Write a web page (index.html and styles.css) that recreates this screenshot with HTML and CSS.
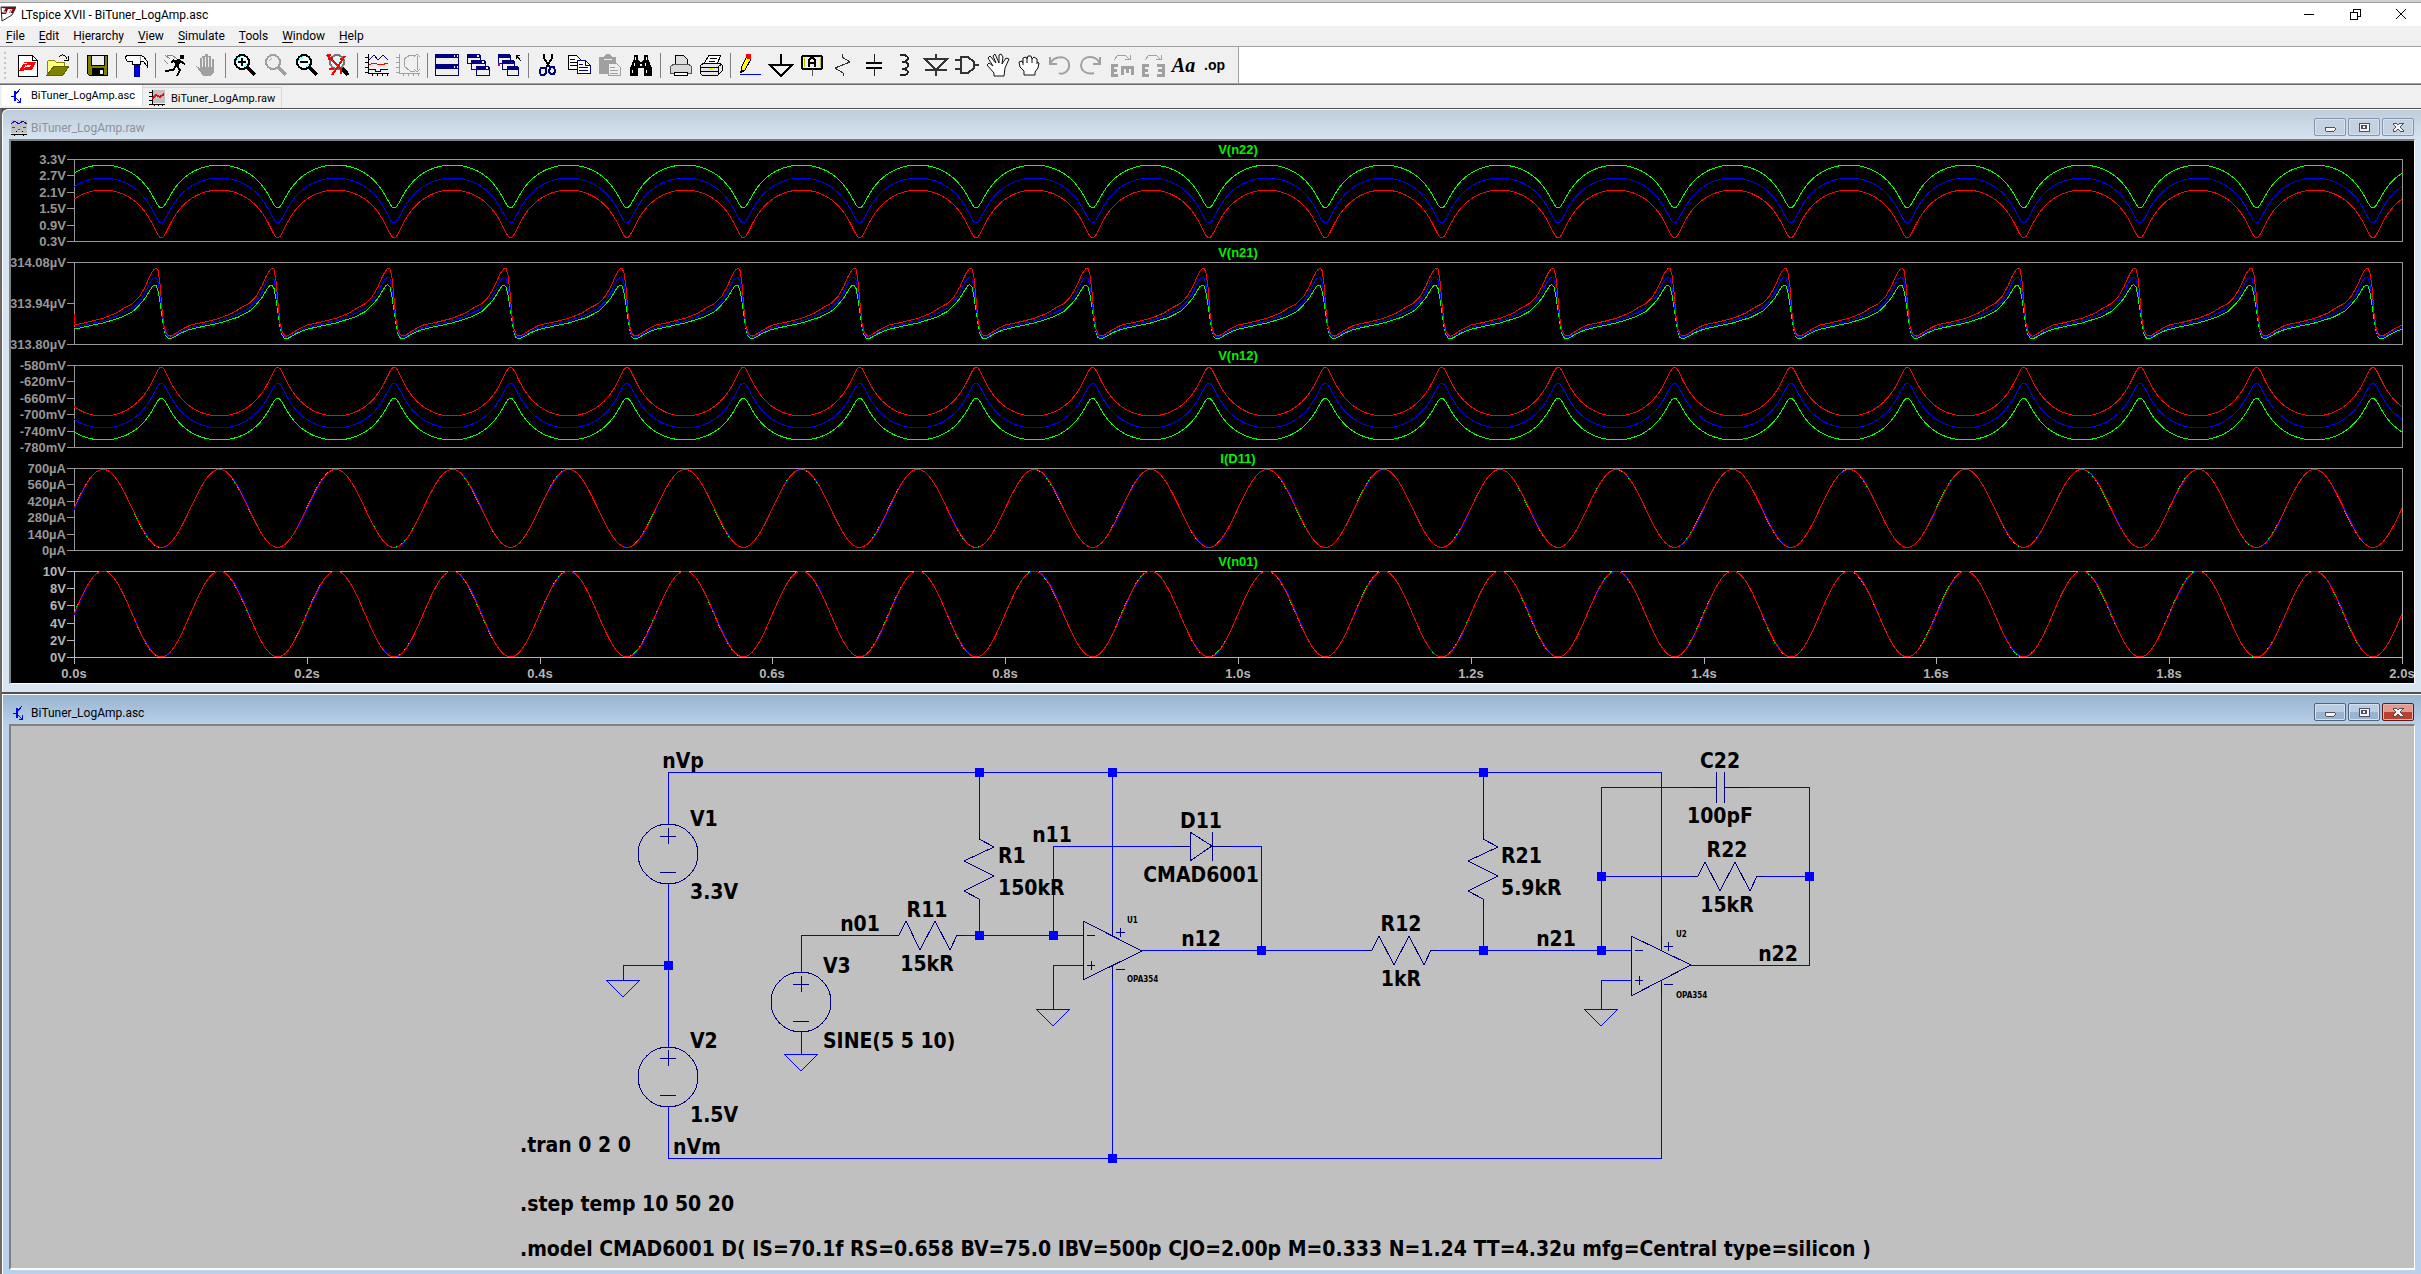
FILE: index.html
```html
<!DOCTYPE html>
<html lang="en">
<head>
<meta charset="utf-8">
<title>LTspice XVII - BiTuner_LogAmp.asc</title>
<link rel="stylesheet" href="styles.css">
</head>
<body>
<header class="titlebar">
  <svg class="app-icon" viewBox="0 0 16 16"><path d="M1 1H16L12 9L2 15Z" fill="#fff" stroke="#222"/><path d="M1 1H16L13 7H9L11 3H8L6 8H1L5 3Z" fill="#7a0a12"/><path d="M5 2L3 6H6M12 3L10 7" stroke="#fff" fill="none"/></svg>
  <h1>LTspice XVII - BiTuner_LogAmp.asc</h1>
  <div class="app-controls">
    <button aria-label="Minimize"><svg viewBox="0 0 12 12"><path d="M1 6H11" /></svg></button>
    <button aria-label="Restore"><svg viewBox="0 0 12 12"><path d="M1 4H8V11H1ZM4 4V1H11V8H8"/></svg></button>
    <button aria-label="Close"><svg class="smooth" viewBox="0 0 12 12"><path d="M1 1L11 11M11 1L1 11"/></svg></button>
  </div>
</header>
<nav class="menubar">
  <button><u>F</u>ile</button><button><u>E</u>dit</button><button>H<u>i</u>erarchy</button><button><u>V</u>iew</button><button><u>S</u>imulate</button><button><u>T</u>ools</button><button><u>W</u>indow</button><button><u>H</u>elp</button>
</nav>
<div class="toolbar-row">
<div class="toolbar">
  <span class="grip"></span>
  <button aria-label="New schematic"><svg viewBox="0 0 24 24"><path d="M3 2H17L22 7V23H3Z" fill="#fff" stroke="#000"/><path d="M17 2V7H22" fill="none" stroke="#000"/><path d="M9 9H21L17 17H9L11 14H14L16 12H12L9 18H4L8 11H11L9 15H10L12 10H9Z" fill="#f00"/></svg></button>
  <button aria-label="Open"><svg viewBox="0 0 24 24"><path d="M1 22V9L3 7H8L10 9H18V13H8L2 22Z" fill="#ffff80" stroke="#888800"/><path d="M1 22L8 13H23L17 22Z" fill="#808000" stroke="#606000"/><path d="M13 4C15 1 19 1 21 6M22 3V7H18" fill="none" stroke="#000"/></svg></button>
  <span class="sep"></span>
  <button aria-label="Save"><svg viewBox="0 0 24 24"><path d="M2 2H22V22H4L2 20Z" fill="#808000" stroke="#000"/><path d="M6 2H19V12H6Z" fill="#efefef" stroke="#000"/><path d="M7 15H19V22H7Z" fill="#000"/><path d="M15 17H18V21H15Z" fill="#efefef"/></svg></button>
  <span class="sep"></span>
  <button aria-label="Control panel"><svg viewBox="0 0 24 24"><path d="M10 11H15V23H10Z" fill="#0000f0" stroke="#000080"/><path d="M1 4L4 2H16L20 4L23 8V13L20 9L16 8V11H8V8H3Z" fill="#fff" stroke="#000"/><path d="M16 3V8" stroke="#999"/></svg></button>
  <span class="sep"></span>
  <button aria-label="Run"><svg viewBox="0 0 24 24"><path d="M17 2H21V6H17Z"/><path d="M11 7L17 6L18 9L15 14L12 13Z"/><path d="M11 7L8 10M17 8L22 11M13 13L10 17L2 18M14 13L17 17L14 23" stroke="#000" stroke-width="2" fill="none"/><path d="M2 2L7 6M4 2H9L14 6M1 7L5 11" stroke="#888" fill="none"/></svg></button>
  <button aria-label="Halt"><svg viewBox="0 0 24 24"><path d="M2 13L6 15V5H8V12V3H11V12V1H14V12V3H17V12V6H20V19L17 23H9Z" fill="#a0a0a0"/><path d="M8 5V14M11 4V14M14 4V14M17 5V14" stroke="#efefef"/></svg></button>
  <span class="sep"></span>
  <button aria-label="Zoom in"><svg viewBox="0 0 24 24"><path d="M14 14L22 22" stroke="#000" stroke-width="4"/><circle cx="9" cy="9" r="7" fill="#f2ffff" stroke="#000" stroke-width="2"/><path d="M3 8L8 3M11 14L15 10" stroke="#60f0f0"/><path d="M9 5V13M5 9H13" stroke="#000" stroke-width="2"/></svg></button>
  <button aria-label="Zoom back"><svg viewBox="0 0 24 24"><path d="M14 14L22 22" stroke="#a0a0a0" stroke-width="4"/><circle cx="9" cy="9" r="7" fill="#eee" stroke="#a0a0a0" stroke-width="2"/><path d="M5 8L8 5" stroke="#a0a0a0"/></svg></button>
  <button aria-label="Zoom out"><svg viewBox="0 0 24 24"><path d="M14 14L22 22" stroke="#000" stroke-width="4"/><circle cx="9" cy="9" r="7" fill="#f2ffff" stroke="#000" stroke-width="2"/><path d="M3 8L8 3M11 14L15 10" stroke="#60f0f0"/><path d="M5 9H13" stroke="#000" stroke-width="2"/></svg></button>
  <button aria-label="Zoom to fit"><svg viewBox="0 0 24 24"><path d="M15 14L22 22" stroke="#000" stroke-width="4"/><circle cx="11" cy="9" r="7" fill="#d0ffff" stroke="#777" stroke-width="2"/><path d="M1 2L15 16V21M19 3L6 22M1 2H5M2 6H5M14 6H18M6 4V8M3 16H8" stroke="#f00" stroke-width="2" fill="none"/></svg></button>
  <span class="sep"></span>
  <button aria-label="Pick visible traces"><svg viewBox="0 0 24 24"><path d="M3 1V20H24M0 4H3M0 9H3M0 14H3M0 19H3M7 20V23M12 20V23M17 20V23M22 20V23" stroke="#000" fill="none"/><path d="M4 7L9 2L13 7L18 2L23 7" stroke="#000080" fill="none"/><path d="M4 12L8 10L16 12L23 10" stroke="#f00" fill="none"/><path d="M4 16H10V18H15V16H23" stroke="#000080" fill="none"/></svg></button>
  <button aria-label="Autorange"><svg viewBox="0 0 24 24"><path d="M3 1V20H24M0 4H3M0 9H3M0 14H3M0 19H3M7 20V23M12 20V23M17 20V23M22 20V23M19 2H14L8 6V13L14 18H19M21 3V17M18 4L21 1L24 4M18 16L21 19L24 16" stroke="#a0a0a0" fill="none"/></svg></button>
  <span class="sep"></span>
  <button aria-label="Tile windows"><svg viewBox="0 0 24 24"><path d="M0 1H24V23H0Z" fill="#000080"/><path d="M1 5H23V11H1ZM1 16H23V22H1Z" fill="#efefef"/><path d="M19 2H20V4H19ZM22 2H23V4H22ZM19 13H20V15H19ZM22 13H23V15H22Z" fill="#fff"/></svg></button>
  <button aria-label="Cascade windows"><svg viewBox="0 0 24 24"><g fill="#efefef" stroke="#000080"><path d="M1 2H14V10H1Z"/><path d="M5 8H19V16H5Z"/><path d="M10 14H23V22H10Z"/></g><path d="M1 1H14V5H1ZM5 7H19V11H5ZM10 13H23V17H10Z" fill="#000080"/><path d="M11 2H13V4H11ZM16 8H18V10H16ZM20 14H22V16H20Z" fill="#fff"/></svg></button>
  <button aria-label="Close all windows"><svg viewBox="0 0 24 24"><g fill="#efefef" stroke="#000080"><path d="M1 2H13V10H1Z"/><path d="M5 8H17V16H5Z"/><path d="M10 14H21V22H10Z"/></g><path d="M1 1H13V5H1ZM5 7H17V11H5ZM10 13H21V17H10Z" fill="#000080"/><path d="M1 10H3V13H1Z" fill="#c00060"/><path d="M19 6V2H23M19 2L24 8" stroke="#000" fill="none"/></svg></button>
  <span class="sep"></span>
  <button aria-label="Cut"><svg viewBox="0 0 24 24"><path d="M8 1V5L14 15M16 1V5L10 15" stroke="#000" stroke-width="2" fill="none"/><path d="M5 15H10V20L8 22H5L4 20V17ZM14 14H18L19 18L18 21H15L13 19Z" stroke="#000080" stroke-width="2" fill="none"/></svg></button>
  <button aria-label="Copy"><svg viewBox="0 0 24 24"><path d="M1 2H9L13 6V16H1Z" fill="#fff" stroke="#000"/><path d="M3 6H8M3 9H10M3 12H10" stroke="#000"/><path d="M10 7H18L23 12V20H10Z" fill="#fff" stroke="#000080"/><path d="M18 7V12H23M12 11H16M12 14H21M12 17H21" stroke="#000080" fill="none"/></svg></button>
  <button aria-label="Paste"><svg viewBox="0 0 24 24"><path d="M1 4H6L8 1H12L14 4H18V21H1Z" fill="#a0a0a0"/><path d="M6 6H14" stroke="#efefef"/><path d="M10 10H18L22 14V22H10Z" fill="#efefef" stroke="#a0a0a0"/><path d="M12 14H17M12 17H20M12 20H20" stroke="#a0a0a0"/></svg></button>
  <button aria-label="Find"><svg viewBox="0 0 24 24"><path d="M5 2H9V6L11 9H13L15 6V2H19V6L23 15V23H15V15H9V23H1V15L5 6Z"/><path d="M6 4H7V7H6ZM17 4H18V7H17ZM5 10H6V13H5ZM16 10H17V13H16ZM3 17H4V20H3ZM17 17H18V20H17ZM11 11H13V13H11Z" fill="#fff"/></svg></button>
  <span class="sep"></span>
  <button aria-label="Print"><svg viewBox="0 0 24 24"><path d="M7 11V2H15L19 6V11" fill="#ddd" stroke="#000"/><path d="M2 14L6 11H20L23 13V20H2Z" fill="#d8d8d8" stroke="#555"/><path d="M6 19H19V22H6Z" fill="#fff" stroke="#000"/></svg></button>
  <button aria-label="Print setup"><svg viewBox="0 0 24 24"><path d="M5 11L10 2H22L18 11Z" fill="#fff" stroke="#000"/><path d="M11 5H18M10 8H16" stroke="#000"/><path d="M1 13L5 10H20L23 12V18L19 22H3L1 20Z" fill="#e6e6e6" stroke="#000"/><path d="M1 14H19L23 11M1 18H19M19 14V22" stroke="#000" fill="none"/><path d="M10 15H14V17H10Z" fill="#ee0"/></svg></button>
  <span class="sep"></span>
  <button aria-label="Wire"><svg viewBox="0 0 24 24"><path d="M3 15L9 3L13 6L7 17L3 20Z" fill="#ff0" stroke="#000"/><path d="M8 1H13V6H9Z" fill="#f00"/><path d="M2 20L3 16L6 19Z"/><path d="M2 21H23" stroke="#00f"/></svg></button>
  <button aria-label="Ground"><svg viewBox="0 0 24 24"><path d="M12 1V12M1 12H23L12 23Z" fill="none" stroke="#000" stroke-width="2"/></svg></button>
  <button aria-label="Label net"><svg viewBox="0 0 24 24"><path d="M3 3H21L22 4V15L21 16H3L2 15V4Z" fill="#efefef" stroke="#000" stroke-width="2"/><path d="M4 5V14M20 5V14" stroke="#bb0"/><path d="M12 16V23" stroke="#555"/><path d="M9 14V7L11 5H13L15 7V14M9 10H15" fill="none" stroke="#000" stroke-width="2"/></svg></button>
  <button aria-label="Resistor"><svg viewBox="0 0 24 24"><path d="M11 1V4L19 9L4 15L12 20V23" fill="none" stroke="#333"/></svg></button>
  <button aria-label="Capacitor"><svg viewBox="0 0 24 24"><path d="M12 1V11M12 15V23" stroke="#222"/><path d="M4 10H20M4 15H20" stroke="#000" stroke-width="2"/></svg></button>
  <button aria-label="Inductor"><svg viewBox="0 0 24 24"><path d="M8 1V2C17 1 17 9 9 9C17 8 17 16 9 16C17 16 17 23 8 22V23" fill="none" stroke="#222" stroke-width="2"/></svg></button>
  <button aria-label="Diode"><svg viewBox="0 0 24 24"><path d="M12 1V6M1 6H23L12 17ZM1 17H23M12 17V23" fill="none" stroke="#333" stroke-width="2"/></svg></button>
  <button aria-label="Component"><svg viewBox="0 0 24 24"><path d="M0 7H6M0 16H6M19 12H24M6 4H13L19 9V15L13 20H6Z" fill="none" stroke="#333" stroke-width="2"/></svg></button>
  <button aria-label="Move"><svg class="smooth" viewBox="0 0 24 24"><path d="M8 23V20L1 12L3 10L7 13L2 5L4 3L10 10L7 3L9 1L13 10V2L15 1L17 4L16 11L20 5L23 6L19 15L18 23Z" fill="#fff" stroke="#111"/></svg></button>
  <button aria-label="Drag"><svg class="smooth" viewBox="0 0 24 24"><path d="M7 22V18L3 14L2 9L5 8L6 10V5L9 4L10 6L11 3H14L15 6L17 4L20 6V9L22 10L21 15L18 19V22Z" fill="#fff" stroke="#111"/><path d="M6 10V12M10 6V10M15 6V10M20 9V11" stroke="#111"/></svg></button>
  <button aria-label="Undo"><svg class="smooth" viewBox="0 0 24 24"><path d="M2 4V11H9M2 11C6 2 20 2 21 11C22 19 14 22 11 20" fill="none" stroke="#a0a0a0" stroke-width="2"/></svg></button>
  <button aria-label="Redo"><svg class="smooth" viewBox="0 0 24 24"><path d="M21 4V11H14M21 11C17 1 3 2 2 12C2 18 8 22 15 20" fill="none" stroke="#a0a0a0" stroke-width="2"/></svg></button>
  <button aria-label="Rotate"><svg viewBox="0 0 24 24"><path d="M4 7L8 2H15L19 6M15 6H20V2" fill="none" stroke="#a0a0a0"/><path d="M8 12H2V22H8M2 17H7M12 22V14H22V22M17 14V20" fill="none" stroke="#a0a0a0" stroke-width="3"/></svg></button>
  <button aria-label="Mirror"><svg viewBox="0 0 24 24"><path d="M4 7L8 2H15L19 6M15 6H20V2" fill="none" stroke="#a0a0a0"/><path d="M8 12H2V22H8M2 17H7M16 12H22V22H16M22 17H17" fill="none" stroke="#a0a0a0" stroke-width="3"/></svg></button>
  <button class="glyph-text">Aa</button>
  <button class="glyph-op">.op</button>
</div>
</div>
<div class="tabs" role="tablist">
  <button class="tab active" role="tab" aria-selected="true"><svg viewBox="0 0 16 16"><path d="M5 3V13M6 3V13M2 8H5M6 7L11 1M6 9L12 15M8 14L11 14V10" stroke="#00f" fill="none"/></svg><span>BiTuner_LogAmp.asc</span></button>
  <button class="tab" role="tab" aria-selected="false"><svg viewBox="0 0 16 16"><path d="M3 0H16V13H3Z" fill="#c0c0c0"/><path d="M3 0V14H16M0 2H3M0 6H3M0 10H3M0 14H3M5 14V16M9 14V16M13 14V16" stroke="#000" fill="none"/><path d="M3 9L7 5L11 7L15 4" stroke="#f00" stroke-width="2" fill="none"/></svg><span>BiTuner_LogAmp.raw</span></button>
</div>
<main class="workspace">
  <section class="child inactive">
    <div class="child-title">
      <svg class="doc-icon" viewBox="0 0 16 16"><path d="M0 0H16V13H0Z" fill="#c0c0c0"/><path d="M0 4L4 1L8 4L12 1L16 4" stroke="#00f" fill="none"/><path d="M1 7H4M7 9H9M12 7H15" stroke="#f00"/><path d="M0 14H16M3 14V16M12 14V16M5 11H6M11 11H12" stroke="#000"/></svg>
      <h2>BiTuner_LogAmp.raw</h2>
      <div class="child-controls">
        <button aria-label="Minimize plot"><svg viewBox="0 0 16 12"><rect x="3" y="6" width="10" height="4" rx="1"/></svg></button>
        <button aria-label="Maximize plot"><svg viewBox="0 0 16 12"><rect x="3" y="2" width="10" height="8"/><path class="hole" d="M5 4H11V8H5ZM7 5V7H9V5Z"/></svg></button>
        <button aria-label="Close plot"><svg viewBox="0 0 16 12"><path d="M3 2H6L8 4L10 2H13V3L10 6L13 9V10H10L8 8L6 10H3V9L6 6L3 3Z"/></svg></button>
      </div>
    </div>
    <div class="client plot-client">
      <svg id="waveforms" class="waveforms" viewBox="0 0 2403 542" role="img" aria-label="Simulation waveforms"></svg>
    </div>
  </section>
  <section class="child">
    <div class="child-title">
      <svg class="doc-icon" viewBox="0 0 16 16"><path d="M5 3V13M6 3V13M2 8H5M6 7L11 1M6 9L12 15M8 14L11 14V10" stroke="#00f" fill="none"/></svg>
      <h2>BiTuner_LogAmp.asc</h2>
      <div class="child-controls">
        <button aria-label="Minimize schematic"><svg viewBox="0 0 16 12"><rect x="3" y="6" width="10" height="4" rx="1"/></svg></button>
        <button aria-label="Maximize schematic"><svg viewBox="0 0 16 12"><rect x="3" y="2" width="10" height="8"/><path class="hole" d="M5 4H11V8H5ZM7 5V7H9V5Z"/></svg></button>
        <button class="close" aria-label="Close schematic"><svg viewBox="0 0 16 12"><path d="M3 2H6L8 4L10 2H13V3L10 6L13 9V10H10L8 8L6 10H3V9L6 6L3 3Z"/></svg></button>
      </div>
    </div>
    <div class="client sheet">
      <svg class="schematic" viewBox="11 726 2403 542" role="img" aria-label="Log amplifier schematic">
        <g class="wire">
          <path d="M668 824V772H1661V950M668 883V1047M668 1106V1158H1661V980M668 965H623V980M979 772V839M979 899V935M801 972V935H893M957 935H1083M1053 935V846H1173M1231 846H1261V950M1083 965H1053V1009M801 1032V1054M1112 772V935M1112 966V1158M1142 950H1366M1432 950H1631M1483 772V839M1483 899V950M1631 980H1601V1009M1601 950V787H1691M1750 787H1809V965H1691M1601 876H1691M1764 876H1809"/>
          <path d="M606 980H640L623 997ZM784 1054H818L801 1071ZM1036 1009H1070L1053 1026ZM1584 1009H1618L1601 1026Z"/>
        </g>
        <g class="part">
          <circle cx="668" cy="854" r="30"/><circle cx="668" cy="1077" r="30"/><circle cx="801" cy="1002" r="30"/>
          <path d="M660 836H676M668 828V844M660 872H676M660 1058H676M668 1050V1066M660 1095H676M793 984H809M801 976V992M793 1021H809"/>
          <path d="M979 832V839L994 847L964 861L994 876L964 891L979 899V906M1483 832V839L1498 847L1468 861L1498 876L1468 891L1483 899V906"/>
          <path d="M891 935H899L906 921L920 950L935 921L950 950L957 935H964M1365 950H1372L1379 936L1394 965L1409 936L1424 965L1431 950H1438M1691 876H1698L1705 862L1720 891L1735 862L1750 891L1757 876H1764"/>
          <path d="M1173 846H1190M1190 832V861L1212 846ZM1212 832V861M1212 846H1231"/>
          <path d="M1691 787H1716M1716 772V803M1724 772V803M1724 787H1750"/>
          <path d="M1083 921V980L1142 951ZM1087 935H1095M1087 965H1095M1091 961V970M1116 932H1125M1120 928V937M1116 969H1125M1112 921V935M1112 966V980"/>
          <path d="M1631 936V996L1691 965ZM1635 950H1643M1635 980H1643M1639 976V985M1664 946H1673M1668 942V951M1664 984H1673M1661 936V950M1661 980V995"/>
        </g>
        <g class="junction">
          <rect x="664" y="961" width="9" height="9"/><rect x="975" y="768" width="9" height="9"/><rect x="1108" y="768" width="9" height="9"/><rect x="1479" y="768" width="9" height="9"/><rect x="975" y="931" width="9" height="9"/><rect x="1049" y="931" width="9" height="9"/><rect x="1257" y="946" width="9" height="9"/><rect x="1479" y="946" width="9" height="9"/><rect x="1597" y="946" width="9" height="9"/><rect x="1597" y="872" width="9" height="9"/><rect x="1805" y="872" width="9" height="9"/><rect x="1108" y="1154" width="9" height="9"/>
        </g>
        <g class="label">
          <text x="690" y="826">V1</text><text x="690" y="899">3.3V</text>
          <text x="690" y="1048">V2</text><text x="690" y="1122">1.5V</text>
          <text x="823" y="973">V3</text><text x="823" y="1048">SINE(5 5 10)</text>
          <text x="998" y="863">R1</text><text x="998" y="895">150kR</text>
          <text x="1501" y="863">R21</text><text x="1501" y="895">5.9kR</text>
          <text x="520" y="1152">.tran 0 2 0</text>
          <text x="520" y="1211">.step temp 10 50 20</text>
          <text x="520" y="1256">.model CMAD6001 D( IS=70.1f RS=0.658 BV=75.0 IBV=500p CJO=2.00p M=0.333 N=1.24 TT=4.32u mfg=Central type=silicon )</text>
        </g>
        <g class="label centered">
          <text x="683" y="768">nVp</text><text x="697" y="1154">nVm</text>
          <text x="860" y="931">n01</text><text x="1052" y="842">n11</text><text x="1201" y="946">n12</text><text x="1556" y="946">n21</text><text x="1778" y="961">n22</text>
          <text x="927" y="917">R11</text><text x="927" y="971">15kR</text>
          <text x="1201" y="828">D11</text><text x="1201" y="882">CMAD6001</text>
          <text x="1401" y="931">R12</text><text x="1401" y="986">1kR</text>
          <text x="1720" y="768">C22</text><text x="1720" y="823">100pF</text>
          <text x="1727" y="857">R22</text><text x="1727" y="912">15kR</text>
        </g>
        <g class="label small">
          <text x="1127" y="923">U1</text><text x="1127" y="982">OPA354</text>
          <text x="1676" y="937">U2</text><text x="1676" y="998">OPA354</text>
        </g>
      </svg>
    </div>
  </section>
</main>
<script src="waveforms.js"></script>
</body>
</html>
```
FILE: waveforms.js
```js
const NS = "http://www.w3.org/2000/svg";
const svg = document.getElementById("waveforms");
const LEFT = 63, RIGHT = 2391, CYCLES = 20;
const PERIOD = (RIGHT - LEFT) / CYCLES;

function add(name, attrs, text) {
  const el = document.createElementNS(NS, name);
  for (const key in attrs) el.setAttribute(key, attrs[key]);
  if (text) el.textContent = text;
  svg.appendChild(el);
}

// Diode current in µA for a phase of 0..1 within one cycle.
const sine = p => Math.sin(2 * Math.PI * p);
const current = p => (5 + 5 * sine(p)) / 0.015 + 22;
const logRatio = p => Math.log(689 / current(p)) / Math.log(689 / 22);

// V(n21) samples over one cycle: phase in 1/349, level in 1/3 px below the pane top.
const spike = {
  red: [[0,189],[39,181],[87,169],[127,153],[152,137],[177,124],[197,103],[214,73],[227,43],[235,28],[244,18],[251,20],[254,38],[259,73],[264,143],[270,193],[277,215],[287,223],[297,219],[317,206],[337,195],[349,189]],
  blue: [[0,197],[39,188],[87,177],[127,163],[162,146],[177,138],[197,118],[214,93],[227,63],[235,51],[244,44],[251,53],[257,93],[264,148],[270,198],[277,221],[287,226],[297,223],[317,211],[337,202],[349,197]],
  lime: [[0,202],[39,193],[87,183],[142,166],[177,148],[197,128],[214,108],[227,86],[237,71],[244,68],[250,76],[257,113],[264,163],[270,203],[277,226],[287,231],[297,227],[317,215],[337,206],[349,202]]
};
function sample(points, p) {
  const t = p * 349;
  let i = 1;
  while (i < points.length - 1 && points[i][0] < t) i++;
  const [x0, y0] = points[i - 1], [x1, y1] = points[i];
  return (y0 + (y1 - y0) * (t - x0) / (x1 - x0)) / 3;
}

const log = (base, swing) => p => base + swing * logRatio(p);
// The three temperature steps coincide here; a slight drift lets them show through each other.
const drift = (f, k) => (p, n) => f((p + 1 + k * Math.max(0, Math.sin(n * 9 + k * 900))) % 1);
const amps = p => 82 * (1 - current(p) / 700);
const volts = p => 43 - 43 * sine(p);

const panes = [
  { title: "V(n22)", top: 18, height: 82, labels: ["3.3V","2.7V","2.1V","1.5V","0.9V","0.3V"],
    traces: { lime: log(6, 43), blue: log(19, 45), red: log(31, 48) } },
  { title: "V(n21)", top: 121, height: 82, labels: ["314.08µV","313.94µV","313.80µV"],
    traces: { lime: p => sample(spike.lime, p), blue: p => sample(spike.blue, p), red: p => sample(spike.red, p) } },
  { title: "V(n12)", top: 224, height: 82, labels: ["-580mV","-620mV","-660mV","-700mV","-740mV","-780mV"],
    traces: { lime: log(75, -42), blue: log(63, -45), red: log(51, -49) } },
  { title: "I(D11)", top: 327, height: 82, labels: ["700µA","560µA","420µA","280µA","140µA","0µA"],
    traces: { lime: drift(amps, 0.002), blue: drift(amps, -0.005), red: amps } },
  { title: "V(n01)", top: 430, height: 86, front: true, labels: ["10V","8V","6V","4V","2V","0V"],
    traces: { lime: drift(volts, 0.002), blue: drift(volts, -0.005), red: volts } }
];

for (const pane of panes) {
  const tone = pane.front ? " front" : "";
  add("rect", { class: "frame" + tone, x: LEFT, y: pane.top, width: RIGHT - LEFT, height: pane.height });
  add("text", { class: "trace-name", x: (LEFT + RIGHT) / 2, y: pane.top - 5 }, pane.title);
  pane.labels.forEach((label, i) => {
    const y = Math.round(pane.top + pane.height * i / (pane.labels.length - 1));
    add("path", { class: "frame" + tone, d: `M${LEFT - 7} ${y}H${LEFT}` });
    add("text", { class: "value" + tone, x: LEFT - 8, y: y + 5 }, label);
  });
  for (const color in pane.traces) {
    const points = [];
    for (let x = LEFT; x <= RIGHT; x += 2) {
      const cycles = (x - LEFT) / PERIOD;
      points.push(x + "," + (pane.top + pane.traces[color](cycles % 1, cycles)).toFixed(2));
    }
    add("polyline", { class: "trace", stroke: color, points: points.join(" ") });
  }
}
add("path", { class: "trace", stroke: "red", d: "M63 173V185" });
for (let i = 0; i <= 10; i++) {
  const x = Math.round(LEFT + (RIGHT - LEFT) * i / 10);
  add("path", { class: "frame front", d: `M${x} 516V523` });
  add("text", { class: "time front", x, y: 537 }, (i * 0.2).toFixed(1) + "s");
}
```
FILE: styles.css
```css
* { box-sizing: border-box; }
body { margin: 0; background: #f0f0f0; font: 12px/16px Roboto, "Open Sans", sans-serif; color: #000; overflow-x: hidden; }
button { margin: 0; padding: 0; border: 0; background: none; font: inherit; color: inherit; }
h1, h2 { margin: 0; font: inherit; }
svg { display: block; shape-rendering: crispEdges; }
svg.smooth { shape-rendering: auto; }

.titlebar { display: flex; align-items: center; height: 26px; background: #fff; border-top: 2px solid #d0d0d0; box-shadow: inset 0 1px #a0a0a0; }
.app-icon { width: 16px; height: 16px; margin: 0 5px 0 0; shape-rendering: auto; }
.titlebar h1 { flex: 1; padding-top: 1px; }
.app-controls { display: flex; gap: 6px; }
.app-controls button { display: grid; place-items: center; width: 40px; height: 22px; }
.app-controls svg { width: 12px; height: 12px; fill: none; stroke: #000; }

.menubar { display: flex; gap: 14px; height: 21px; padding-left: 6px; border-bottom: 1px solid #a0a0a0; }
.menubar button { height: 19px; }
.menubar u { text-underline-offset: 2px; }

.toolbar-row { background: #fff; border-bottom: 1px solid #696969; box-shadow: inset 0 -1px #a0a0a0; height: 38px; padding-bottom: 1px; }
.toolbar { display: flex; align-items: center; width: max-content; height: 36px; padding: 0 8px 0 4px; background: #f0f0f0; border-right: 1px solid #a0a0a0; }
.grip { width: 2px; height: 27px; margin-right: 5px; background: repeating-linear-gradient(#c4c4c4 0 2px, transparent 2px 5px); }
.toolbar button { display: grid; place-items: center; width: 31px; height: 30px; }
.toolbar svg { width: 24px; height: 24px; overflow: visible; }
.sep { width: 1px; height: 25px; margin: 0 3px 0 4px; background: #808080; }
.toolbar .glyph-text { font: italic bold 20px/24px "Liberation Serif", serif; }
.toolbar .glyph-op { font: bold 14px/20px "Liberation Sans", sans-serif; }

.tabs { display: flex; align-items: flex-start; height: 23px; padding-left: 2px; font-size: 11px; line-height: 15px; }
.tab { display: flex; align-items: center; height: 21px; padding: 0 6px; border-right: 1px solid #d9d9d9; gap: 6px; }
.tab.active { padding: 0 7px; background: #fff; }
.tab svg { width: 16px; height: 16px; }
.tab:not(.active) { margin-top: 2px; border-top: 1px solid #d9d9d9; }

.workspace { border-top: 1px solid #505050; border-left: 2px solid #696969; background: #505050; }
.child { padding: 0 6px 4px; border-top: 1px solid #fff; border-left: 1px solid #fff; background: linear-gradient(#99b4d1, #b9d1ea 30px); }
.child.inactive { padding-bottom: 8px; margin-bottom: 2px; border-top-left-radius: 6px; background: linear-gradient(#bfcddb, #d7e4f2 30px); }
.child-title { display: flex; height: 29px; align-items: flex-end; gap: 4px; padding: 0 1px 3px 2px; }
.inactive h2 { color: #8c929a; }
.child-title h2 { flex: 1; }
.doc-icon { width: 16px; height: 16px; }
.child-controls { display: flex; gap: 2px; }
.child-controls button { display: grid; place-items: center; width: 32px; height: 18px; border: 1px solid #52647c; border-radius: 2px; box-shadow: inset 0 0 0 1px #d4e2f2; background: linear-gradient(#b9cde4 50%, #9ab4d0 50%); }
.inactive .child-controls button { border-color: #8494ae; background: #c3d1e1; }
.child-controls svg { width: 16px; height: 12px; fill: #f4f4f4; stroke: #50505c; }
.child-controls .hole { fill: #50505c; fill-rule: evenodd; stroke: none; }
.child-controls .close { border-color: #5c1a1a; background: linear-gradient(#e09a90 50%, #bc4030 50%); box-shadow: inset 0 0 0 1px #eab4a8; }

.client { border: solid; border-width: 2px 1px 1px 2px; border-color: #808080 #fff #fff #808080; }
.sheet { background: #c0c0c0; border-bottom-width: 2px; }
.plot-client { background: #000; }
.waveforms, .schematic { width: 100%; height: auto; }

.frame { fill: none; stroke: #969696; }
.trace { fill: none; }
.waveforms text { font: bold 13px "Liberation Sans", sans-serif; fill: #969696; }
.waveforms .value { text-anchor: end; }
.waveforms .time, .waveforms .trace-name { text-anchor: middle; }
.waveforms .trace-name { fill: #00f000; }
.waveforms text.front { fill: #b4b4b4; }
.frame.front { stroke: #b4b4b4; }

.wire { fill: none; stroke: #0000ff; }
.part { fill: none; stroke: #000080; }
.junction { fill: #0000ff; }
.label { font: bold 21px "DejaVu Sans Condensed", "DejaVu Sans", sans-serif; fill: #000; }
.label.centered { text-anchor: middle; }
.label.small { font-size: 8px; }
```
